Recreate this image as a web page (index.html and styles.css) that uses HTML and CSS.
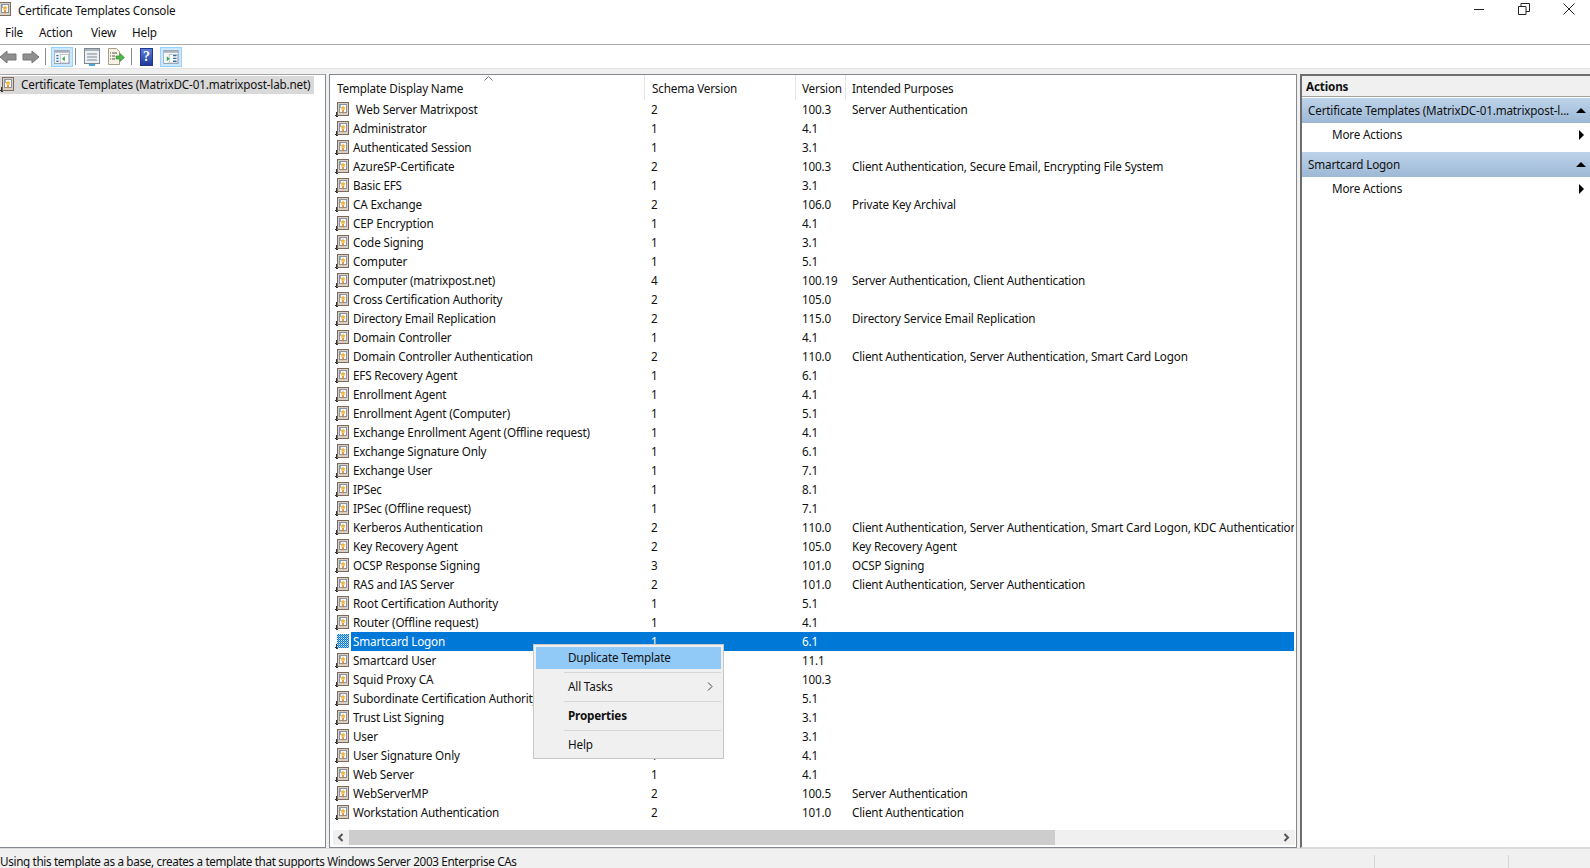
FILE: index.html
```html
<!DOCTYPE html>
<html lang="en">
<head>
	<meta charset="UTF-8">
	<title>Certificate Templates Console</title>
	<link rel="stylesheet" href="styles.css">
</head>
<body>
<svg class="defs" width="0" height="0">
	<defs>
		<pattern id="dots" width="2" height="2" patternUnits="userSpaceOnUse">
			<rect width="2" height="2" fill="#0078d7"/>
			<rect width="1" height="1" fill="#d8e8f4"/>
			<rect x="1" y="1" width="1" height="1" fill="#7fb4dd"/>
		</pattern>
		<symbol id="cert" viewBox="0 0 16 16">
			<path d="M1.500 10v3.500M0 13.500h2.500M1 14.500h2" stroke="#333" fill="none"/>
			<rect x="2.500" y="0.500" width="11" height="13" fill="#d9cfc4" stroke="#7c6a5e"/>
			<rect x="4.500" y="2.500" width="7" height="8" fill="#fbfbfb" stroke="#8b93a3"/>
			<path d="M8 3.500l1 1.500 1.500.3-1 1.200.1 1.500-1.600-.6-1.600.6.1-1.500-1-1.200 1.500-.3z" fill="#f0b43a"/>
			<path d="M7.200 8h1.600v3.500l-.8-.8-.8.800z" fill="#d9821e"/>
			<rect x="5" y="3" width="1" height="3" fill="#8fb2d9"/>
		</symbol>
		<symbol id="cert-sel" viewBox="0 0 16 16">
			<path d="M1.500 10v3.500M0 13.500h2.500M1 14.500h2" stroke="#333" fill="none"/>
			<rect x="2" y="0" width="12" height="14" fill="url(#dots)"/>
		</symbol>
		<symbol id="pane" viewBox="0 0 22 20">
			<rect x="0.500" y="0.500" width="21" height="19" fill="#f4f6f8" stroke="#7d8794"/>
			<rect x="1" y="1" width="20" height="3" fill="#aab4bf"/>
			<rect x="8.500" y="6.500" width="12" height="12" fill="#fff" stroke="#a8b2bc"/>
		</symbol>
	</defs>
</svg>

<div class="titlebar">
	<svg class="title-icon"><use href="#cert"/></svg>
	<span class="title-text">Certificate Templates Console</span>
	<div class="win-btns">
		<svg width="12" height="12" viewBox="0 0 12 12"><path d="M1 6.500h10" stroke="#222"/></svg>
		<svg width="12" height="12" viewBox="0 0 12 12"><path d="M.5 3.500h7.500v8h-7.500zM3 3.500v-3h8.500v8h-3.500" stroke="#222" fill="none"/></svg>
		<svg width="12" height="12" viewBox="0 0 12 12"><path d="M.5.500l11 11M11.500.500l-11 11" stroke="#222" fill="none"/></svg>
	</div>
</div>

<div class="menubar">
	<span>File</span><span>Action</span><span>View</span><span>Help</span>
</div>

<div class="toolbar">
	<svg class="tool-arrow first" width="18" height="16" viewBox="0 0 18 16"><path d="M1 8l7-6v3h9v6h-9v3z" fill="#8f8f8f" stroke="#777"/></svg>
	<svg class="tool-arrow" width="18" height="16" viewBox="0 0 18 16"><path d="M17 8l-7-6v3h-9v6h9v3z" fill="#8f8f8f" stroke="#777"/></svg>
	<i class="tool-sep"></i>
	<span class="tool-btn on">
		<svg width="16" height="14" viewBox="0 0 22 20"><use href="#pane"/><path d="M15 9v7l-4-3.500z" fill="#2ea84a"/><path d="M3 8h3M3 12h3M3 16h3" stroke="#2b6cb0" stroke-width="2"/></svg>
	</span>
	<i class="tool-sep"></i>
	<svg class="tool-img" width="16" height="18" viewBox="0 0 16 18"><rect x=".5" y=".5" width="15" height="15" fill="#eef0f2" stroke="#7d8794"/><rect x="1" y="1" width="14" height="2" fill="#aab4bf"/><path d="M3 6h10M3 9h10M3 12h10" stroke="#7d8794"/><rect x="5" y="16" width="6" height="2" fill="#4aa8e0"/></svg>
	<svg class="tool-img doc" width="17" height="18" viewBox="0 0 17 18"><path d="M.5.500h8l3 3v13h-11z" fill="#f7f3e4" stroke="#a79f86"/><path d="M2 5h1M2 8h1M2 11h1M4 5h5M4 8h3M4 11h3" stroke="#555"/><path d="M8 8h4V5.500l4.500 4-4.500 4V11H8z" fill="#4fb848" stroke="#2f8a2c" stroke-width=".6"/></svg>
	<i class="tool-sep"></i>
	<span class="help-icon">?</span>
	<span class="tool-btn on">
		<svg width="16" height="14" viewBox="0 0 22 20"><use href="#pane"/><path d="M5 9v7l4-3.500z" fill="#2ea84a"/><path d="M14 8h5M14 12h5M14 16h5" stroke="#2b6cb0" stroke-width="2"/></svg>
	</span>
</div>

<div class="workspace">
	<div class="tree-pane">
		<div class="tree-item">
			<svg class="row-icon"><use href="#cert"/></svg>
			<span>Certificate Templates (MatrixDC-01.matrixpost-lab.net)</span>
		</div>
	</div>

	<div class="list-pane">
		<div class="list-head">
			<span class="col-name">Template Display Name<svg class="sort-caret" width="9" height="5" viewBox="0 0 9 5"><path d="M.5 4.500l4-4 4 4" stroke="#777" fill="none"/></svg></span>
			<span class="col-schema">Schema Version</span>
			<span class="col-ver">Version</span>
			<span class="col-purpose">Intended Purposes</span>
		</div>
		<div class="list-rows">
			<div class="row"><svg class="row-icon"><use href="#cert"/></svg><span class="name">&nbsp;Web Server Matrixpost</span><span>2</span><span>100.3</span><span>Server Authentication</span></div>
			<div class="row"><svg class="row-icon"><use href="#cert"/></svg><span class="name">Administrator</span><span>1</span><span>4.1</span><span></span></div>
			<div class="row"><svg class="row-icon"><use href="#cert"/></svg><span class="name">Authenticated Session</span><span>1</span><span>3.1</span><span></span></div>
			<div class="row"><svg class="row-icon"><use href="#cert"/></svg><span class="name">AzureSP-Certificate</span><span>2</span><span>100.3</span><span>Client Authentication, Secure Email, Encrypting File System</span></div>
			<div class="row"><svg class="row-icon"><use href="#cert"/></svg><span class="name">Basic EFS</span><span>1</span><span>3.1</span><span></span></div>
			<div class="row"><svg class="row-icon"><use href="#cert"/></svg><span class="name">CA Exchange</span><span>2</span><span>106.0</span><span>Private Key Archival</span></div>
			<div class="row"><svg class="row-icon"><use href="#cert"/></svg><span class="name">CEP Encryption</span><span>1</span><span>4.1</span><span></span></div>
			<div class="row"><svg class="row-icon"><use href="#cert"/></svg><span class="name">Code Signing</span><span>1</span><span>3.1</span><span></span></div>
			<div class="row"><svg class="row-icon"><use href="#cert"/></svg><span class="name">Computer</span><span>1</span><span>5.1</span><span></span></div>
			<div class="row"><svg class="row-icon"><use href="#cert"/></svg><span class="name">Computer (matrixpost.net)</span><span>4</span><span>100.19</span><span>Server Authentication, Client Authentication</span></div>
			<div class="row"><svg class="row-icon"><use href="#cert"/></svg><span class="name">Cross Certification Authority</span><span>2</span><span>105.0</span><span></span></div>
			<div class="row"><svg class="row-icon"><use href="#cert"/></svg><span class="name">Directory Email Replication</span><span>2</span><span>115.0</span><span>Directory Service Email Replication</span></div>
			<div class="row"><svg class="row-icon"><use href="#cert"/></svg><span class="name">Domain Controller</span><span>1</span><span>4.1</span><span></span></div>
			<div class="row"><svg class="row-icon"><use href="#cert"/></svg><span class="name">Domain Controller Authentication</span><span>2</span><span>110.0</span><span>Client Authentication, Server Authentication, Smart Card Logon</span></div>
			<div class="row"><svg class="row-icon"><use href="#cert"/></svg><span class="name">EFS Recovery Agent</span><span>1</span><span>6.1</span><span></span></div>
			<div class="row"><svg class="row-icon"><use href="#cert"/></svg><span class="name">Enrollment Agent</span><span>1</span><span>4.1</span><span></span></div>
			<div class="row"><svg class="row-icon"><use href="#cert"/></svg><span class="name">Enrollment Agent (Computer)</span><span>1</span><span>5.1</span><span></span></div>
			<div class="row"><svg class="row-icon"><use href="#cert"/></svg><span class="name">Exchange Enrollment Agent (Offline request)</span><span>1</span><span>4.1</span><span></span></div>
			<div class="row"><svg class="row-icon"><use href="#cert"/></svg><span class="name">Exchange Signature Only</span><span>1</span><span>6.1</span><span></span></div>
			<div class="row"><svg class="row-icon"><use href="#cert"/></svg><span class="name">Exchange User</span><span>1</span><span>7.1</span><span></span></div>
			<div class="row"><svg class="row-icon"><use href="#cert"/></svg><span class="name">IPSec</span><span>1</span><span>8.1</span><span></span></div>
			<div class="row"><svg class="row-icon"><use href="#cert"/></svg><span class="name">IPSec (Offline request)</span><span>1</span><span>7.1</span><span></span></div>
			<div class="row"><svg class="row-icon"><use href="#cert"/></svg><span class="name">Kerberos Authentication</span><span>2</span><span>110.0</span><span>Client Authentication, Server Authentication, Smart Card Logon, KDC Authentication</span></div>
			<div class="row"><svg class="row-icon"><use href="#cert"/></svg><span class="name">Key Recovery Agent</span><span>2</span><span>105.0</span><span>Key Recovery Agent</span></div>
			<div class="row"><svg class="row-icon"><use href="#cert"/></svg><span class="name">OCSP Response Signing</span><span>3</span><span>101.0</span><span>OCSP Signing</span></div>
			<div class="row"><svg class="row-icon"><use href="#cert"/></svg><span class="name">RAS and IAS Server</span><span>2</span><span>101.0</span><span>Client Authentication, Server Authentication</span></div>
			<div class="row"><svg class="row-icon"><use href="#cert"/></svg><span class="name">Root Certification Authority</span><span>1</span><span>5.1</span><span></span></div>
			<div class="row"><svg class="row-icon"><use href="#cert"/></svg><span class="name">Router (Offline request)</span><span>1</span><span>4.1</span><span></span></div>
			<div class="row selected"><svg class="row-icon"><use href="#cert-sel"/></svg><span class="name">Smartcard Logon</span><span>1</span><span>6.1</span><span></span></div>
			<div class="row"><svg class="row-icon"><use href="#cert"/></svg><span class="name">Smartcard User</span><span>1</span><span>11.1</span><span></span></div>
			<div class="row"><svg class="row-icon"><use href="#cert"/></svg><span class="name">Squid Proxy CA</span><span>1</span><span>100.3</span><span></span></div>
			<div class="row"><svg class="row-icon"><use href="#cert"/></svg><span class="name">Subordinate Certification Authority</span><span>1</span><span>5.1</span><span></span></div>
			<div class="row"><svg class="row-icon"><use href="#cert"/></svg><span class="name">Trust List Signing</span><span>1</span><span>3.1</span><span></span></div>
			<div class="row"><svg class="row-icon"><use href="#cert"/></svg><span class="name">User</span><span>1</span><span>3.1</span><span></span></div>
			<div class="row"><svg class="row-icon"><use href="#cert"/></svg><span class="name">User Signature Only</span><span>1</span><span>4.1</span><span></span></div>
			<div class="row"><svg class="row-icon"><use href="#cert"/></svg><span class="name">Web Server</span><span>1</span><span>4.1</span><span></span></div>
			<div class="row"><svg class="row-icon"><use href="#cert"/></svg><span class="name">WebServerMP</span><span>2</span><span>100.5</span><span>Server Authentication</span></div>
			<div class="row"><svg class="row-icon"><use href="#cert"/></svg><span class="name">Workstation Authentication</span><span>2</span><span>101.0</span><span>Client Authentication</span></div>
		</div>
		<div class="hscroll">
			<svg width="9" height="9" viewBox="0 0 9 9"><path d="M6.500 1l-3.500 3.500 3.500 3.500" stroke="#555" stroke-width="2" fill="none"/></svg>
			<div class="hscroll-track"><div class="hscroll-thumb"></div></div>
			<svg width="9" height="9" viewBox="0 0 9 9"><path d="M2.500 1l3.500 3.500-3.500 3.500" stroke="#555" stroke-width="2" fill="none"/></svg>
		</div>
	</div>

	<div class="actions-pane">
		<div class="actions-head">Actions</div>
		<div class="action-group">
			<span>Certificate Templates (MatrixDC-01.matrixpost-l...</span>
			<i class="tri-up"></i>
		</div>
		<div class="action-item"><span>More Actions</span><i class="tri-right"></i></div>
		<div class="action-group second">
			<span>Smartcard Logon</span>
			<i class="tri-up"></i>
		</div>
		<div class="action-item"><span>More Actions</span><i class="tri-right"></i></div>
	</div>
</div>

<div class="statusbar">
	<span class="status-main">Using this template as a base, creates a template that supports Windows Server 2003 Enterprise CAs</span>
	<span class="status-cell"></span>
	<span class="status-cell"></span>
</div>

<div class="context-menu">
	<div class="menu-item hot">Duplicate Template</div>
	<div class="menu-sep"></div>
	<div class="menu-item">All Tasks<svg width="6" height="9" viewBox="0 0 6 9"><path d="M1 .5l4 4-4 4" stroke="#444" fill="none"/></svg></div>
	<div class="menu-sep"></div>
	<div class="menu-item bold">Properties</div>
	<div class="menu-sep"></div>
	<div class="menu-item">Help</div>
</div>
</body>
</html>
```

FILE: styles.css
```css
html,body{
	margin: 0;
	padding: 0;
	height: 868px;
	overflow: hidden;
}
body{
	position: relative;
	display: flex;
	flex-direction: column;
	background: #fff;
	color: #111;
	font: 11.7px/16px "Noto Sans", "Open Sans", sans-serif;
	letter-spacing: -.17px;
}
.defs{
	position: absolute;
}
.titlebar{
	height: 22px;
	display: flex;
	align-items: center;
}
.title-icon{
	width: 16px;
	height: 16px;
	margin-left: -3px;
	margin-right: 5px;
	margin-top: -3px;
}
.title-text{
	padding-bottom: 2px;
}
.win-btns{
	margin-left: auto;
	display: flex;
	gap: 33px;
	padding-right: 15px;
	margin-top: -4px;
}
.menubar{
	height: 22px;
	display: flex;
	align-items: center;
	padding-left: 5px;
	border-bottom: 1px solid #a9a9a9;
}
.menubar span{
	padding-bottom: 2px;
}
.menubar span:nth-child(1){ width: 34px; }
.menubar span:nth-child(2){ width: 52px; }
.menubar span:nth-child(3){ width: 41px; }
.toolbar{
	height: 23px;
	display: flex;
	align-items: center;
}
.tool-arrow{
	margin-right: 5px;
}
.tool-arrow.first{
	margin-left: -1px;
}
.tool-sep{
	width: 1px;
	height: 17px;
	background: #8a8a8a;
	margin: 0 5px 0 0;
}
.tool-btn{
	width: 22px;
	height: 20px;
	box-sizing: border-box;
	border: 1px solid #99d1ff;
	background: #cce8ff;
	display: flex;
	align-items: center;
	justify-content: center;
	margin-right: 2px;
}
.tool-img{
	margin: 0 8px 0 3px;
}
.tool-img.doc{
	margin: 0 6px 0 0;
}
.help-icon{
	width: 13px;
	height: 18px;
	margin: 0 7px 0 3px;
	background: linear-gradient(#5a7fd8, #1f3a9e);
	border: 1px solid #24358a;
	box-sizing: border-box;
	color: #fff;
	font: bold 14px/16px "Liberation Serif", serif;
	text-align: center;
}
.workspace{
	flex: 1;
	display: flex;
	gap: 3px;
	background: #f0f0f0;
	padding-top: 5px;
	border-top: 1px solid #e3e3e3;
	min-height: 0;
}
.tree-pane{
	flex: none;
	width: 326px;
	box-sizing: border-box;
	background: #fff;
	border-top: 1px solid #a5a5a5;
	border-right: 1px solid #828790;
	border-bottom: 1px solid #828790;
	padding-top: 1px;
}
.tree-item{
	width: 314px;
	height: 18px;
	background: #d9d9d9;
	display: flex;
	align-items: center;
	gap: 5px;
	white-space: nowrap;
}
.tree-item span{
	padding-bottom: 2px;
}
.row-icon{
	width: 16px;
	height: 16px;
	flex: none;
}
.list-pane{
	flex: none;
	width: 968px;
	box-sizing: border-box;
	background: #fff;
	border: 1px solid #828790;
	display: flex;
	flex-direction: column;
	overflow: hidden;
}
.list-head{
	height: 25px;
	flex: none;
	display: grid;
	grid-template-columns: 315px 151px 50px 1fr;
	align-items: center;
	white-space: nowrap;
}
.list-head span{
	height: 25px;
	line-height: 26px;
	padding-left: 6px;
	border-right: 1px solid #e5e5e5;
	box-sizing: border-box;
	position: relative;
}
.list-head .col-purpose{
	border-right: 0;
}
.list-head .col-name{
	padding-left: 7px;
}
.list-head .col-schema{
	padding-left: 7px;
}
.sort-caret{
	position: absolute;
	left: 154px;
	top: 1px;
}
.row{
	height: 19px;
	display: grid;
	grid-template-columns: 23px 292px 151px 50px 1fr;
	align-items: center;
	white-space: nowrap;
	overflow: hidden;
}
.row span{
	padding-left: 6px;
	padding-bottom: 2px;
}
.row .name{
	padding-left: 0;
}
.row .row-icon{
	margin-left: 5px;
}
.row.selected{
	background: linear-gradient(to right, #fff 21px, #0078d7 21px);
	color: #fff;
}
.list-rows{
	flex: 1;
	min-height: 0;
	margin-right: 2px;
}
.hscroll{
	height: 15px;
	flex: none;
	margin: 0 1px 2px 3px;
	background: #f0f0f0;
	display: flex;
	align-items: center;
	gap: 4px;
	padding: 0 4px 0 3px;
}
.hscroll-track{
	flex: 1;
	height: 15px;
}
.hscroll-thumb{
	width: 706px;
	height: 15px;
	background: #cdcdcd;
}
.actions-pane{
	flex: 1;
	min-width: 0;
	background: #fff;
	border-top: 2px solid #6d6d6d;
	border-left: 2px solid #6d6d6d;
	border-bottom: 1px solid #dcdcdc;
}
.actions-head{
	height: 20px;
	line-height: 20px;
	padding-left: 4px;
	background: #f0f0f0;
	font-weight: bold;
	border-bottom: 1px solid #a0a0a0;
}
.action-group{
	height: 25px;
	margin-top: 1px;
	padding: 0 4px 0 6px;
	display: flex;
	align-items: center;
	justify-content: space-between;
	background: linear-gradient(#bdd3ea, #9db8d5);
	white-space: nowrap;
}
.action-group span{
	padding-bottom: 2px;
}
.action-group.second{
	margin-top: 5px;
}
.tri-up{
	width: 0;
	height: 0;
	border: 5px solid transparent;
	border-top: 0;
	border-bottom: 5px solid #000;
}
.action-item{
	height: 24px;
	padding: 0 6px 0 30px;
	display: flex;
	align-items: center;
	justify-content: space-between;
}
.action-item span{
	padding-bottom: 2px;
}
.tri-right{
	width: 0;
	height: 0;
	border: 5px solid transparent;
	border-right: 0;
	border-left: 5px solid #000;
}
.statusbar{
	height: 20px;
	flex: none;
	background: #f0f0f0;
	border-top: 1px solid #dcdcdc;
	box-sizing: border-box;
	display: flex;
	white-space: nowrap;
}
.status-main{
	flex: none;
	width: 1374px;
	padding-top: 4px;
	letter-spacing: -.34px;
}
.status-cell{
	flex: none;
	align-self: flex-end;
	height: 13px;
	width: 133px;
	border-left: 1px solid #d5d5d5;
}
.context-menu{
	position: absolute;
	left: 533px;
	top: 644px;
	width: 191px;
	height: 115px;
	box-sizing: border-box;
	background: #f0f0f0;
	border: 1px solid #c8c8c8;
	padding: 2px;
}
.menu-item{
	height: 22px;
	box-sizing: border-box;
	padding: 0 8px 2px 32px;
	display: flex;
	align-items: center;
	justify-content: space-between;
}
.menu-item.hot{
	background: #91c9f7;
}
.menu-item.bold{
	font-weight: bold;
}
.menu-sep{
	height: 1px;
	margin: 3px 0 3px 28px;
	background: #d7d7d7;
}
```
